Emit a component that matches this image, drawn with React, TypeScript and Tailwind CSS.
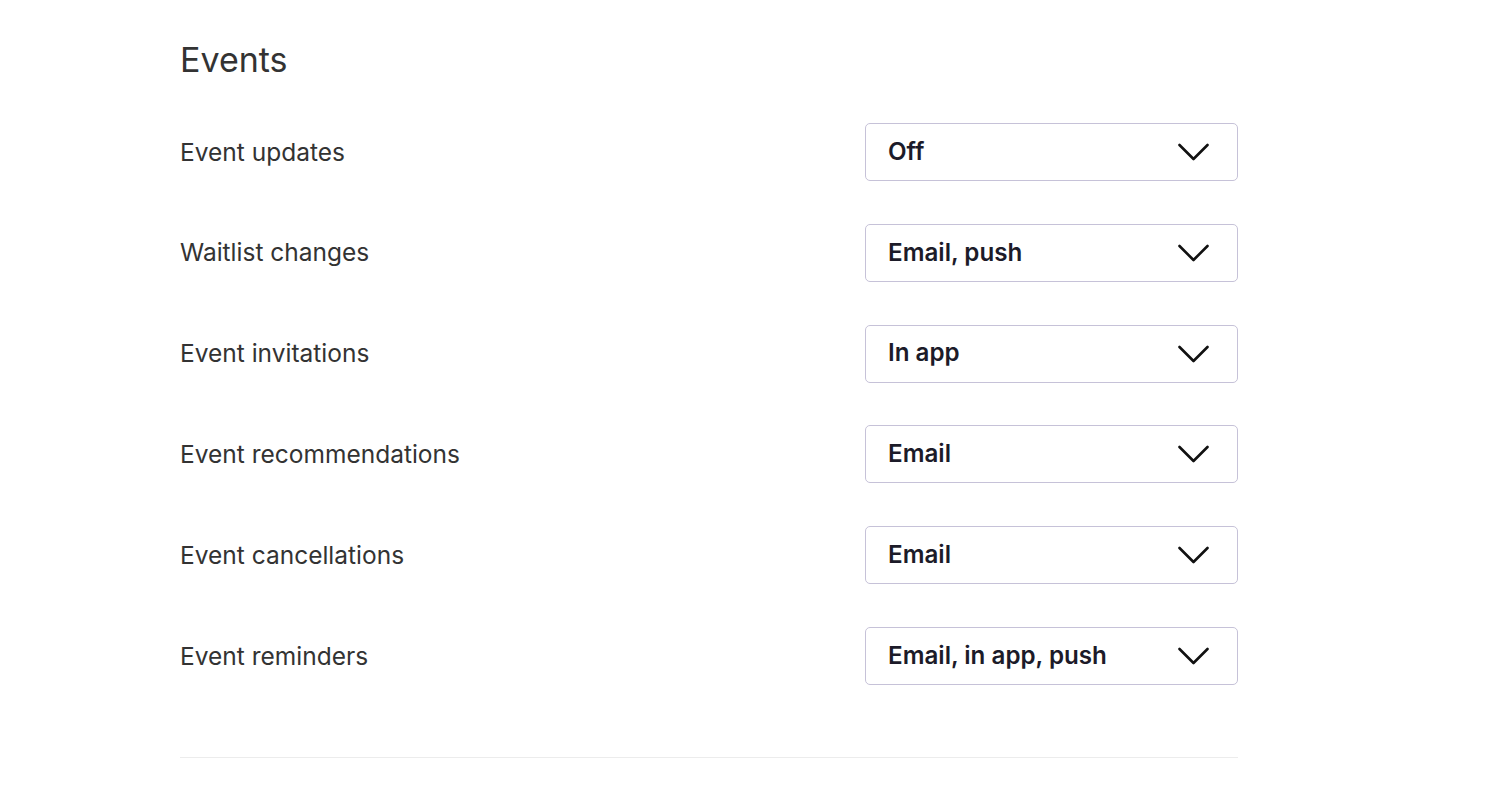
const rows = [
  { label: 'Event updates', value: 'Off' },
  { label: 'Waitlist changes', value: 'Email, push' },
  { label: 'Event invitations', value: 'In app' },
  { label: 'Event recommendations', value: 'Email' },
  { label: 'Event cancellations', value: 'Email' },
  { label: 'Event reminders', value: 'Email, in app, push' },
];

const Chevron = () => (
  <svg width="31" height="18" viewBox="0 0 31 18" fill="none" className="text-[#111111]">
    <path d="M1.5 2 L15.5 16 L29.5 2" stroke="currentColor" strokeWidth="2.6" strokeLinecap="round" strokeLinejoin="round" />
  </svg>
);

const App = () => {
  return (
    <div className="min-h-screen bg-white font-['Inter',sans-serif]">
      <div className="w-[1058px] ml-[180px] pt-[38px]">
        <h2 className="text-[34px] leading-[44px] text-[#333333] font-normal">Events</h2>

        <div className="mt-[41px] flex flex-col gap-[42.8px]">
          {rows.map((row) => (
            <div key={row.label} className="flex items-center justify-between">
              <span className="text-[24.5px] text-[#333333]">{row.label}</span>
              <button className="w-[373px] h-[58px] flex items-center justify-between pl-[22px] pr-[28px] border border-[#c6c2d8] rounded-[5px] bg-white">
                <span className="text-[24.2px] font-semibold text-[#1c1b29]">{row.value}</span>
                <Chevron />
              </button>
            </div>
          ))}
        </div>

        <div className="mt-[72px] border-t border-[#ececec]" />
      </div>
    </div>
  );
};

export default App;
